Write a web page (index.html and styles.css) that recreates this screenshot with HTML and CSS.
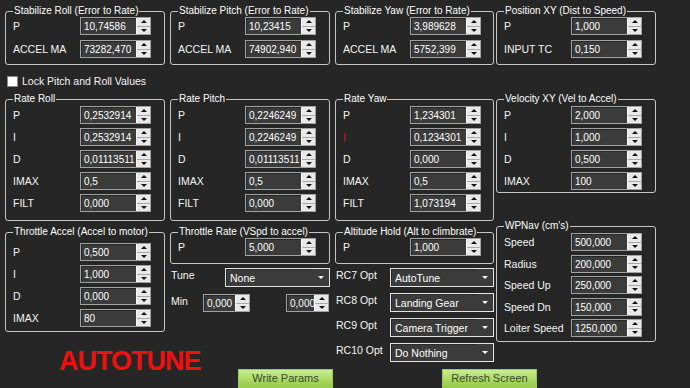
FILE: index.html
```html
<!DOCTYPE html>
<html>
<head>
<title>Extended Tuning</title>
<link rel="stylesheet" href="styles.css">
</head>
<body>
<div class="form">
    <!-- column 1 -->
    <div class="col">
        <fieldset class="grp stab">
            <legend>Stabilize Roll (Error to Rate)</legend>
            <div class="row"><label>P</label><div class="spin"><span class="val">10,74586</span><span class="btns"><i class="up"></i><i class="dn"></i></span></div></div>
            <div class="row"><label>ACCEL MA</label><div class="spin"><span class="val">73282,470</span><span class="btns"><i class="up"></i><i class="dn"></i></span></div></div>
        </fieldset>
        <div class="lock"><span class="box"></span>Lock Pitch and Roll Values</div>
        <fieldset class="grp rate">
            <legend>Rate Roll</legend>
            <div class="row"><label>P</label><div class="spin"><span class="val">0,2532914</span><span class="btns"><i class="up"></i><i class="dn"></i></span></div></div>
            <div class="row"><label>I</label><div class="spin"><span class="val">0,2532914</span><span class="btns"><i class="up"></i><i class="dn"></i></span></div></div>
            <div class="row"><label>D</label><div class="spin"><span class="val">0,01113511</span><span class="btns"><i class="up"></i><i class="dn"></i></span></div></div>
            <div class="row"><label>IMAX</label><div class="spin"><span class="val">0,5</span><span class="btns"><i class="up"></i><i class="dn"></i></span></div></div>
            <div class="row"><label>FILT</label><div class="spin"><span class="val">0,000</span><span class="btns"><i class="up"></i><i class="dn"></i></span></div></div>
        </fieldset>
        <fieldset class="grp thr">
            <legend>Throttle Accel (Accel to motor)</legend>
            <div class="row"><label>P</label><div class="spin"><span class="val">0,500</span><span class="btns"><i class="up"></i><i class="dn"></i></span></div></div>
            <div class="row"><label>I</label><div class="spin"><span class="val">1,000</span><span class="btns"><i class="up"></i><i class="dn"></i></span></div></div>
            <div class="row"><label>D</label><div class="spin"><span class="val">0,000</span><span class="btns"><i class="up"></i><i class="dn"></i></span></div></div>
            <div class="row"><label>IMAX</label><div class="spin"><span class="val">80</span><span class="btns"><i class="up"></i><i class="dn"></i></span></div></div>
        </fieldset>
        <div class="banner">AUTOTUNE</div>
    </div>

    <!-- column 2 -->
    <div class="col">
        <fieldset class="grp stab">
            <legend>Stabilize Pitch (Error to Rate)</legend>
            <div class="row"><label>P</label><div class="spin"><span class="val">10,23415</span><span class="btns"><i class="up"></i><i class="dn"></i></span></div></div>
            <div class="row"><label>ACCEL MA</label><div class="spin"><span class="val">74902,940</span><span class="btns"><i class="up"></i><i class="dn"></i></span></div></div>
        </fieldset>
        <fieldset class="grp rate next">
            <legend>Rate Pitch</legend>
            <div class="row"><label>P</label><div class="spin"><span class="val">0,2246249</span><span class="btns"><i class="up"></i><i class="dn"></i></span></div></div>
            <div class="row"><label>I</label><div class="spin"><span class="val">0,2246249</span><span class="btns"><i class="up"></i><i class="dn"></i></span></div></div>
            <div class="row"><label>D</label><div class="spin"><span class="val">0,01113511</span><span class="btns"><i class="up"></i><i class="dn"></i></span></div></div>
            <div class="row"><label>IMAX</label><div class="spin"><span class="val">0,5</span><span class="btns"><i class="up"></i><i class="dn"></i></span></div></div>
            <div class="row"><label>FILT</label><div class="spin"><span class="val">0,000</span><span class="btns"><i class="up"></i><i class="dn"></i></span></div></div>
        </fieldset>
        <fieldset class="grp one">
            <legend>Throttle Rate (VSpd to accel)</legend>
            <div class="row"><label>P</label><div class="spin"><span class="val">5,000</span><span class="btns"><i class="up"></i><i class="dn"></i></span></div></div>
        </fieldset>
        <div class="opt first"><label>Tune</label><div class="combo"><span>None</span><b></b></div></div>
        <div class="opt min">
            <label>Min</label>
            <div class="spin small"><span class="val">0,000</span><span class="btns"><i class="up"></i><i class="dn"></i></span></div>
            <div class="spin small narrow"><span class="val">0,000</span><span class="btns"><i class="up"></i><i class="dn"></i></span></div>
        </div>
        <div class="btn write">Write Params</div>
    </div>

    <!-- column 3 -->
    <div class="col c3">
        <fieldset class="grp stab">
            <legend>Stabilize Yaw (Error to Rate)</legend>
            <div class="row"><label>P</label><div class="spin"><span class="val">3,989628</span><span class="btns"><i class="up"></i><i class="dn"></i></span></div></div>
            <div class="row"><label>ACCEL MA</label><div class="spin"><span class="val">5752,399</span><span class="btns"><i class="up"></i><i class="dn"></i></span></div></div>
        </fieldset>
        <fieldset class="grp rate next">
            <legend>Rate Yaw</legend>
            <div class="row"><label>P</label><div class="spin"><span class="val">1,234301</span><span class="btns"><i class="up"></i><i class="dn"></i></span></div></div>
            <div class="row"><label class="warn">I</label><div class="spin"><span class="val">0,1234301</span><span class="btns"><i class="up"></i><i class="dn"></i></span></div></div>
            <div class="row"><label>D</label><div class="spin"><span class="val">0,000</span><span class="btns"><i class="up"></i><i class="dn"></i></span></div></div>
            <div class="row"><label>IMAX</label><div class="spin"><span class="val">0,5</span><span class="btns"><i class="up"></i><i class="dn"></i></span></div></div>
            <div class="row"><label>FILT</label><div class="spin"><span class="val">1,073194</span><span class="btns"><i class="up"></i><i class="dn"></i></span></div></div>
        </fieldset>
        <fieldset class="grp one">
            <legend>Altitude Hold (Alt to climbrate)</legend>
            <div class="row"><label>P</label><div class="spin"><span class="val">1,000</span><span class="btns"><i class="up"></i><i class="dn"></i></span></div></div>
        </fieldset>
        <div class="opt first"><label>RC7 Opt</label><div class="combo"><span>AutoTune</span><b></b></div></div>
        <div class="opt"><label>RC8 Opt</label><div class="combo"><span>Landing Gear</span><b></b></div></div>
        <div class="opt"><label>RC9 Opt</label><div class="combo"><span>Camera Trigger</span><b></b></div></div>
        <div class="opt"><label>RC10 Opt</label><div class="combo"><span>Do Nothing</span><b></b></div></div>
        <div class="btn refresh">Refresh Screen</div>
    </div>

    <!-- column 4 -->
    <div class="col c4">
        <fieldset class="grp stab">
            <legend>Position XY (Dist to Speed)</legend>
            <div class="row"><label>P</label><div class="spin"><span class="val">1,000</span><span class="btns"><i class="up"></i><i class="dn"></i></span></div></div>
            <div class="row"><label>INPUT TC</label><div class="spin"><span class="val">0,150</span><span class="btns"><i class="up"></i><i class="dn"></i></span></div></div>
        </fieldset>
        <fieldset class="grp vel next">
            <legend>Velocity XY (Vel to Accel)</legend>
            <div class="row"><label>P</label><div class="spin"><span class="val">2,000</span><span class="btns"><i class="up"></i><i class="dn"></i></span></div></div>
            <div class="row"><label>I</label><div class="spin"><span class="val">1,000</span><span class="btns"><i class="up"></i><i class="dn"></i></span></div></div>
            <div class="row"><label>D</label><div class="spin"><span class="val">0,500</span><span class="btns"><i class="up"></i><i class="dn"></i></span></div></div>
            <div class="row"><label>IMAX</label><div class="spin"><span class="val">100</span><span class="btns"><i class="up"></i><i class="dn"></i></span></div></div>
        </fieldset>
        <fieldset class="grp wp">
            <legend>WPNav (cm's)</legend>
            <div class="row"><label>Speed</label><div class="spin"><span class="val">500,000</span><span class="btns"><i class="up"></i><i class="dn"></i></span></div></div>
            <div class="row"><label>Radius</label><div class="spin"><span class="val">200,000</span><span class="btns"><i class="up"></i><i class="dn"></i></span></div></div>
            <div class="row"><label>Speed Up</label><div class="spin"><span class="val">250,000</span><span class="btns"><i class="up"></i><i class="dn"></i></span></div></div>
            <div class="row"><label>Speed Dn</label><div class="spin"><span class="val">150,000</span><span class="btns"><i class="up"></i><i class="dn"></i></span></div></div>
            <div class="row"><label>Loiter Speed</label><div class="spin"><span class="val">1250,000</span><span class="btns"><i class="up"></i><i class="dn"></i></span></div></div>
        </fieldset>
    </div>
</div>
</body>
</html>
```

FILE: styles.css
```css
* {
    box-sizing: border-box;
}

body {
    margin: 0;
    width: 690px;
    height: 388px;
    overflow: hidden;
    background: #262626;
    color: #f4f4f4;
    font-family: "Liberation Sans", Arial, sans-serif;
}

.form {
    display: flex;
    padding: 5px 0 0 5px;
}

.col {
    width: 160px;
    margin-right: 5px;
    display: flex;
    flex-direction: column;
}

.col.c3 {
    width: 159px;
    margin-right: 2px;
}

/* group boxes */
.grp {
    margin: 0;
    min-width: 0;
    padding: 0 6px 6px 7px;
    border: 1px solid #c6c6c6;
    border-radius: 3px;
}

.grp legend {
    padding: 0 1px;
    font-size: 10px;
    line-height: 12px;
    color: #fff;
}

.grp.next {
    margin-top: 28px;
}

.grp.rate {
    padding-bottom: 8px;
}

.grp.thr {
    margin-top: 5px;
    padding-bottom: 4px;
}

.grp.one {
    margin-top: 5px;
    padding-bottom: 7px;
}

.grp.vel {
    padding-bottom: 2px;
}

.grp.wp {
    margin-top: 27px;
    padding-bottom: 4px;
}

.row {
    display: flex;
    align-items: center;
    height: 18px;
    margin-top: 4px;
    font-size: 10.5px;
}

.stab .row {
    margin-top: 5px;
}

.stab .row:first-of-type,
.one .row {
    margin-top: 0;
}

.rate .row:first-of-type,
.vel .row:first-of-type,
.wp .row:first-of-type {
    margin-top: 1px;
}

.thr .row:first-of-type {
    margin-top: 5px;
}

.wp .row {
    margin-top: 3.5px;
}

.row label {
    width: 67px;
    flex: none;
}

.row label.warn {
    color: #d41a1a;
}

/* numeric up/down */
.spin {
    display: flex;
    width: 71px;
    height: 18px;
    flex: none;
    border: 1px solid #a2a2a2;
    background: #3b3b3b;
}

.spin .val {
    flex: 1;
    min-width: 0;
    padding-left: 2px;
    font-size: 10px;
    line-height: 16px;
    color: #fff;
    white-space: nowrap;
    overflow: hidden;
    border-top: 1px solid #262626;
    border-left: 1px solid #262626;
    line-height: 15px;
}

.spin .btns {
    width: 14px;
    flex: none;
    display: flex;
    flex-direction: column;
    background: #e9e9e9;
    border-left: 1px solid #fdfdfd;
}

.spin .btns i {
    flex: 1;
    display: flex;
    align-items: center;
    justify-content: center;
}

.spin .btns i::before {
    content: '';
    border-left: 3px solid transparent;
    border-right: 3px solid transparent;
}

.spin .up::before {
    border-bottom: 3px solid #111;
}

.spin .dn {
    border-top: 1px solid #a8a8a8;
}

.spin .dn::before {
    border-top: 3px solid #111;
}

.spin.small {
    width: 47px;
}

.spin.narrow {
    width: 43px;
    margin-left: auto;
    margin-right: 1px;
}

/* lock checkbox */
.lock {
    display: flex;
    align-items: center;
    height: 12px;
    margin-top: 10px;
    padding-left: 2px;
    font-size: 10.5px;
}

.lock .box {
    width: 11px;
    height: 11px;
    margin-right: 4px;
    background: #fff;
    border: 1px solid #8a8a8a;
}

.grp.rate {
    margin-top: 6px;
}

.grp.rate.next {
    margin-top: 28px;
}

/* option rows with combo boxes */
.opt {
    display: flex;
    align-items: flex-start;
    margin-top: 6px;
    padding-left: 1px;
    font-size: 10.5px;
    line-height: 12px;
}

.opt.first {
    margin-top: 4px;
}

.opt label {
    width: 54px;
    flex: none;
    padding-top: 1px;
}

.opt.min {
    margin-top: 7px;
}

.opt.min label {
    width: 32px;
}

.combo {
    flex: 1;
    display: flex;
    height: 19px;
    border: 1px solid #e4e4e4;
    background: #3b3b3b;
    color: #fff;
}

.combo span {
    flex: 1;
    padding-left: 3px;
    line-height: 17px;
    border-top: 1px solid #2a2a2a;
    border-left: 1px solid #2a2a2a;
}

.combo b {
    width: 17px;
    display: flex;
    align-items: center;
    justify-content: center;
}

.combo b::before {
    content: '';
    border-left: 3px solid transparent;
    border-right: 3px solid transparent;
    border-top: 3px solid #fff;
}

/* footer */
.banner {
    margin: 16px 0 0 54px;
    font-size: 27px;
    line-height: 27px;
    font-weight: bold;
    letter-spacing: -1px;
    color: #f01010;
}

.btn {
    width: 95px;
    height: 19px;
    margin-top: 7px;
    border: 1px solid #9ccb55;
    background: linear-gradient(#c8ee8e, #94c945);
    color: #3a482c;
    font-size: 11px;
    line-height: 17px;
    text-align: center;
}

.btn.write {
    margin-top: 57px;
    margin-left: 68px;
}

.btn.refresh {
    margin-left: 107px;
}
```
